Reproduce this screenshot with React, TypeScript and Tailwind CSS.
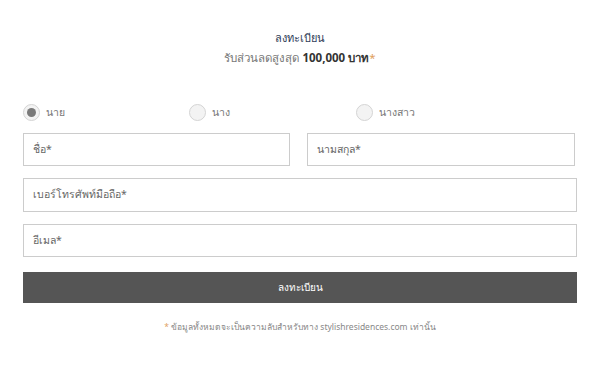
import React from "react";

function Radio({ label, checked }: { label: string; checked?: boolean }) {
  return (
    <label className="flex items-center gap-[6px]">
      <span className="flex h-[17px] w-[17px] items-center justify-center rounded-full border border-[#d4d4d4] bg-[#f3f3f3]">
        {checked && <span className="h-[9px] w-[9px] rounded-full bg-[#7a7a7a]" />}
      </span>
      <span className="text-[10.5px] text-[#777]">{label}</span>
    </label>
  );
}

function Field({ placeholder, className = "" }: { placeholder: string; className?: string }) {
  return (
    <div className={`flex h-[33px] items-center border border-[#cccccc] bg-white px-[9px] text-[10.5px] text-[#666] ${className}`}>
      {placeholder}
    </div>
  );
}

export default function App() {
  return (
    <div
      className="h-[377px] w-[600px] bg-white px-[23px] pt-[30px]"
      style={{ fontFamily: '"Noto Sans", "Liberation Sans", sans-serif' }}
    >
      <div className="flex flex-col items-center">
        <div className="text-[11px] leading-[16px] text-[#2f3d58]">ลงทะเบียน</div>
        <div className="mt-[3px] text-[11.5px] leading-[18px] text-[#777]">
          รับส่วนลดสูงสุด <span className="font-bold text-[#333]">100,000 บาท</span>
          <span className="text-[#e0a060]">*</span>
        </div>
      </div>

      <div className="mt-[37px] flex items-center">
        <div className="w-[166px]">
          <Radio label="นาย" checked />
        </div>
        <div className="w-[167px]">
          <Radio label="นาง" />
        </div>
        <div>
          <Radio label="นางสาว" />
        </div>
      </div>

      <div className="mt-[12px] flex gap-[17px]">
        <Field placeholder="ชื่อ*" className="w-[267px]" />
        <Field placeholder="นามสกุล*" className="w-[268px]" />
      </div>
      <Field placeholder="เบอร์โทรศัพท์มือถือ*" className="mt-[12px] h-[34px] w-[554px]" />
      <Field placeholder="อีเมล*" className="mt-[12px] w-[554px]" />

      <button className="mt-[15px] flex h-[31px] w-[554px] items-center justify-center bg-[#555555] text-[10px] text-white">
        ลงทะเบียน
      </button>

      <div className="mt-[18px] text-center text-[8.5px] text-[#888]">
        <span className="text-[#e0a060]">*</span> ข้อมูลทั้งหมดจะเป็นความลับสำหรับทาง stylishresidences.com เท่านั้น
      </div>
    </div>
  );
}
